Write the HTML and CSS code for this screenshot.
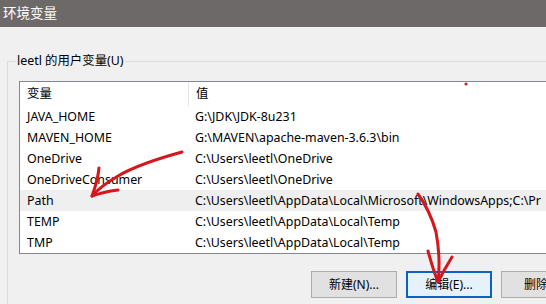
FILE: index.html
```html
<!DOCTYPE html>
<html>
<head>
<meta charset="utf-8">
<link rel="stylesheet" href="styles.css">
</head>
<body>
<div class="window">
  <div class="titlebar">环境变量</div>
  <div class="body">
    <div class="group">
      <div class="legend">leetl 的用户变量(U)</div>
      <div class="list">
        <div class="row header">
          <div class="c1">变量</div>
          <div class="c2">值</div>
        </div>
        <div class="row"><div class="c1">JAVA_HOME</div><div class="c2">G:\JDK\JDK-8u231</div></div>
        <div class="row"><div class="c1">MAVEN_HOME</div><div class="c2">G:\MAVEN\apache-maven-3.6.3\bin</div></div>
        <div class="row"><div class="c1">OneDrive</div><div class="c2">C:\Users\leetl\OneDrive</div></div>
        <div class="row"><div class="c1">OneDriveConsumer</div><div class="c2">C:\Users\leetl\OneDrive</div></div>
        <div class="row sel"><div class="c1">Path</div><div class="c2">C:\Users\leetl\AppData\Local\Microsoft\WindowsApps;C:\Pr</div></div>
        <div class="row"><div class="c1">TEMP</div><div class="c2">C:\Users\leetl\AppData\Local\Temp</div></div>
        <div class="row"><div class="c1">TMP</div><div class="c2">C:\Users\leetl\AppData\Local\Temp</div></div>
      </div>
      <div class="buttons">
        <div class="btn">新建(N)...</div>
        <div class="btn focus">编辑(E)...</div>
        <div class="btn">删除(D)</div>
      </div>
    </div>
  </div>
  <svg class="marks" width="546" height="304" viewBox="0 0 546 304">
    <g fill="none" stroke="#d4171c" stroke-width="3" stroke-linecap="round" stroke-linejoin="round">
      <path d="M182 152 C160 158 135 166 118 176 C106 183 98 189 92 196"/>
      <path d="M99 168 C98 178 95 188 92 196 C100 193 110 191 118 190"/>
      <path d="M418 194 C426 205 432 218 436 232 C439 248 440 265 438 282"/>
      <path d="M428 251 C431 262 434 272 438 282 C442 274 447 265 452 257"/>
    </g>
    <circle cx="466" cy="84" r="1.6" fill="#c0262b"/>
  </svg>
</div>
</body>
</html>
```

FILE: styles.css
```css
html, body {
  margin: 0;
  padding: 0;
  background: #f0f0f0;
}
.window {
  position: relative;
  width: 546px;
  height: 304px;
  overflow: hidden;
  font-family: "Noto Sans", "Noto Sans CJK SC", sans-serif;
  font-size: 12.4px;
  color: #000;
}
.titlebar {
  height: 27px;
  background: #6e6969;
  color: #fff;
  font-family: "Noto Sans CJK SC", sans-serif;
  font-size: 13.5px;
  line-height: 24px;
  padding-left: 3px;
}
.body {
  padding-top: 34px;
  padding-left: 7px;
}
.group {
  border-top: 1px solid #dcdcdc;
  border-left: 1px solid #dcdcdc;
  width: 700px;
  height: 300px;
}
.legend {
  display: inline-block;
  margin-top: -9px;
  margin-left: 8px;
  padding: 0 1px;
  background: #f0f0f0;
  line-height: 16px;
  vertical-align: top;
}
.list {
  margin-top: 2px;
  margin-left: 11px;
  width: 640px;
  background: #fff;
  border: 1px solid #828790;
}
.row {
  display: flex;
  height: 21px;
  line-height: 21px;
  white-space: nowrap;
}
.row.header {
  height: 24px;
  line-height: 24px;
}
.row.header .c1 {
  border-right: 1px solid #e5e5e5;
}
.row.sel {
  background: #efefef;
}
.c1 {
  width: 161px;
  padding-left: 7px;
  flex: none;
}
.c2 {
  padding-left: 7px;
}
.buttons {
  display: flex;
  gap: 9px;
  margin-top: 17px;
  margin-left: 303px;
}
.btn {
  width: 84px;
  height: 25px;
  line-height: 25px;
  text-align: center;
  background: #e1e1e1;
  border: 1px solid #adadad;
  font-size: 12px;
  flex: none;
}
.btn.focus {
  border: 2px solid #0a63c4;
  width: 82px;
  height: 23px;
  line-height: 23px;
  background: #e5f1fb;
}
.marks {
  position: absolute;
  left: 0;
  top: 0;
  pointer-events: none;
}
```
